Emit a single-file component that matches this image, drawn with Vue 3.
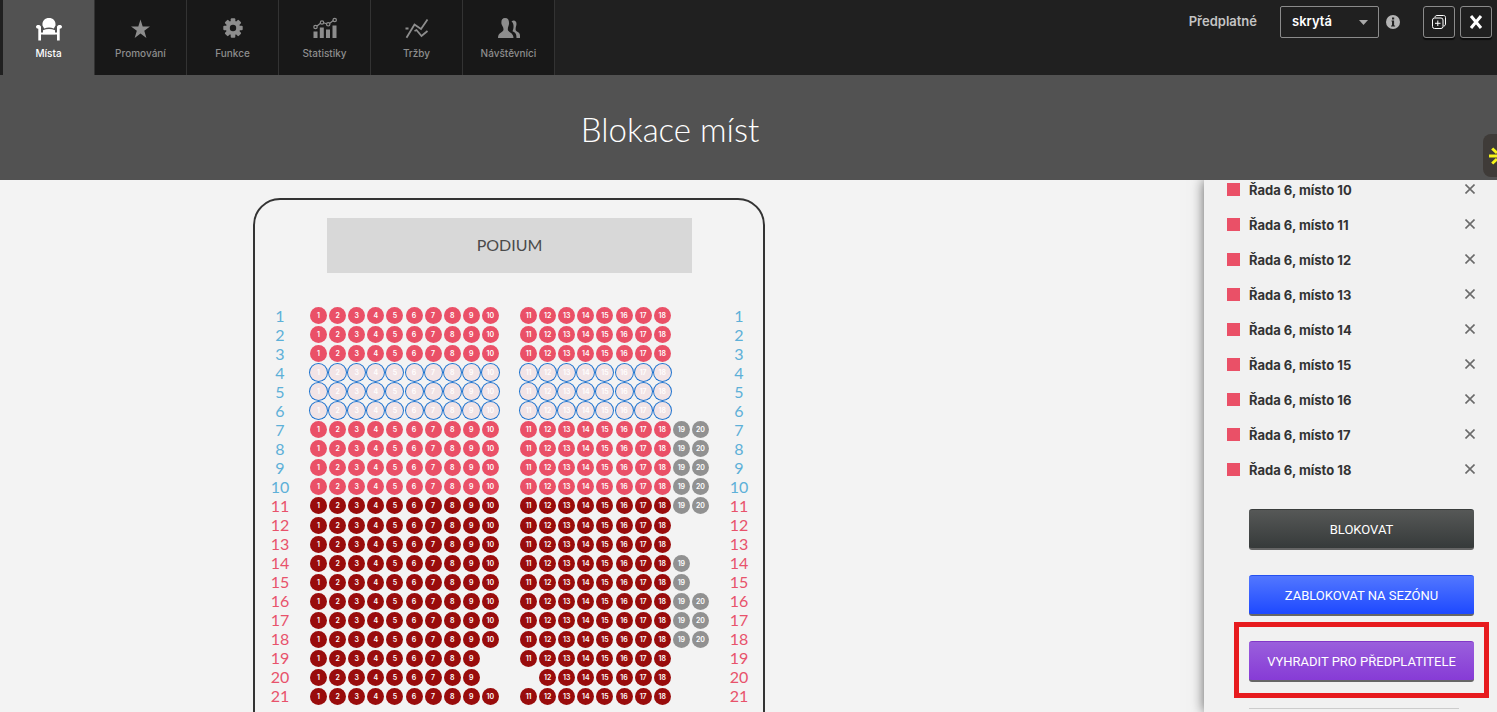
<template>
  <div class="page">
    <header class="topbar">
      <nav class="tabs">
        <a
          v-for="tab in tabs"
          :key="tab.id"
          href="#"
          class="tab"
          :class="{ 'tab--active': tab.id === activeTab }"
          @click.prevent="activeTab = tab.id"
        >
          <svg v-if="tab.id === 'seats'" class="tab-icon" viewBox="0 0 28 26">
            <path d="M7.500 9.500C7 4.500 10 2 14 2s7 2.500 6.500 7.500l-1.700 3C15.500 11.300 12.500 11.300 9.200 12.500z" />
            <path d="M8 14.200c3.800-1.700 8.200-1.700 12 0v4H8z" />
            <path d="M1 10.800c0-2.400 4.500-2.400 5 0v13.700H3.300V12.800C2 12.800 1 12 1 10.800z" />
            <path d="M27 10.800c0-2.400-4.500-2.400-5 0v13.700h2.700V12.800c1.300 0 2.300-.8 2.300-2z" />
            <path d="M6 16.500h16v2H6z" />
          </svg>
          <svg v-else-if="tab.id === 'promo'" class="tab-icon" viewBox="0 0 28 26">
            <path d="M13.500 3.500l2.200 7H23l-5.700 4.200 2.100 7.300-5.900-4.400L7.700 22l2.100-7.300L4 10.500h7.300z" />
          </svg>
          <svg v-else-if="tab.id === 'features'" class="tab-icon" viewBox="0 0 28 26">
            <rect
              v-for="angle in [0, 45, 90, 135]"
              :key="angle"
              x="11.700"
              y="2.300"
              width="4.600"
              height="19.400"
              rx="1"
              :transform="`rotate(${angle} 14 12)`"
            />
            <circle cx="14" cy="12" r="7.200" />
            <circle cx="14" cy="12" r="3.200" fill="#181818" />
          </svg>
          <svg v-else-if="tab.id === 'stats'" class="tab-icon" viewBox="0 0 28 26">
            <path d="M2.500 15.500h4V22h-4zM8.800 11.500h4V22h-4zM15 13.500h4V22h-4zM21.500 9.500h4V22h-4z" />
            <g fill="none" stroke="currentColor" stroke-width="1.200">
              <path d="M6 9.900l3.500-2.600M12.500 6.800l3 1M18.800 7.200l3.500-2.600" />
              <circle cx="4.500" cy="11" r="1.700" />
              <circle cx="11" cy="6.500" r="1.700" />
              <circle cx="17.200" cy="8.300" r="1.700" />
              <circle cx="23.700" cy="4" r="1.700" />
            </g>
          </svg>
          <svg v-else-if="tab.id === 'sales'" class="tab-icon" viewBox="0 0 28 26">
            <g fill="none" stroke="currentColor" stroke-width="1.800">
              <path d="M3.500 21.800L11.500 8.500l6.500 4.500L24.500 3.500" />
              <path d="M2.500 12.500h3M11.500 15l2-1 5 6 6-5" />
            </g>
          </svg>
          <svg v-else class="tab-icon" viewBox="0 0 28 26">
            <path d="M16.500 5.500c2-2 5.200-1 5 2.500-.1 2-.9 2.800-.9 5.500 0 2.500 4.400 2 4.400 6V22h-3.500c0-4.500-1.200-5.500-4-6.800.9-2.200 1.200-3.700 1-5.700-.2-1.600-.6-3-2-4z" />
            <path d="M10 2c3.300 0 4.300 2.500 4 6-.2 2-1.200 3-1.200 5.500 0 3 5.700 2.500 5.700 8.500H3c0-6 5.500-5.500 5.500-8.500C8.500 11 7 10 6.500 8 6 4.500 7 2 10 2z" />
          </svg>
          <span>{{ tab.label }}</span>
        </a>
      </nav>

      <div class="tools">
        <label class="tools-label" for="visibility">Předplatné</label>
        <div class="select-wrap">
          <select id="visibility" v-model="visibility" class="select">
            <option value="hidden">skrytá</option>
            <option value="public">veřejná</option>
          </select>
          <svg class="select-arrow" viewBox="0 0 10 5"><path d="M0 0h9L4.500 5z" /></svg>
        </div>
        <svg class="info" viewBox="0 0 14 14">
          <circle cx="7" cy="7" r="7" fill="#b4b4b4" />
          <path d="M5.500 5.500h2.600v5h1v1H5v-1h1v-4h-.5zM6 2.500h2.200v2H6z" fill="#222" />
        </svg>
        <button type="button" class="tool-btn tool-btn--copy" aria-label="Duplikovat">
          <svg viewBox="0 0 16 16" width="16" height="16" fill="none" stroke="#fff">
            <rect x="1.500" y="4" width="10.500" height="10.500" rx="2" />
            <path d="M4 3.500c0-1.300.7-2 2-2h6.500c1.300 0 2 .7 2 2V10c0 1.300-.7 2-2 2M6.800 6.500v5.500M4 9.300h5.500" />
          </svg>
        </button>
        <button type="button" class="tool-btn" aria-label="Zavřít">
          <svg viewBox="0 0 14 14" width="14" height="14" stroke="#fff" stroke-width="3">
            <path d="M2 1l10 12M12 1L2 13" />
          </svg>
        </button>
      </div>
    </header>

    <div class="banner">
      <h1 class="banner-title">Blokace míst</h1>
      <button type="button" class="widget" aria-label="Nápověda">
        <svg viewBox="0 0 24 24" width="24" height="24" stroke="#f5f51a" stroke-width="3">
          <path d="M1 12h8M23 12h-8M4.200 4.500l4.800 4.500M19.800 19.500L15 15M4.200 19.500L9 15M19.800 4.500L15 9M12 1v7M12 23v-7" />
        </svg>
      </button>
    </div>

    <main class="content">
      <section class="map">
        <div class="hall">
          <div class="podium">PODIUM</div>
          <div class="rows">
            <div v-for="row in rows" :key="row.number" class="row" :class="`row--${row.kind}`">
              <span class="row-label">{{ row.number }}</span>
              <div class="seats">
                <button
                  v-for="seat in row.seats"
                  :key="seat"
                  type="button"
                  class="seat"
                  :class="{ 'seat--extra': seat > 18 }"
                  :style="{ gridColumn: seat > 10 ? seat + 1 : seat }"
                >
                  {{ seat }}
                </button>
              </div>
              <span class="row-label">{{ row.number }}</span>
            </div>
          </div>
        </div>
      </section>

      <aside class="panel">
        <ul class="picked">
          <li v-for="seat in picked" :key="seat" class="picked-item">
            <span class="swatch"></span>
            <span class="picked-name">Řada 6, místo {{ seat }}</span>
            <button type="button" class="remove" aria-label="Odebrat" @click="remove(seat)">
              <svg viewBox="0 0 10 10" width="10" height="10" stroke="#6b6b6b" stroke-width="1.600">
                <path d="M.5.5l9 9M9.500.5l-9 9" />
              </svg>
            </button>
          </li>
        </ul>
        <div class="actions">
          <button type="button" class="action action--block">BLOKOVAT</button>
          <button type="button" class="action action--season">ZABLOKOVAT NA SEZÓNU</button>
          <div class="marked">
            <button type="button" class="action action--reserve">VYHRADIT PRO PŘEDPLATITELE</button>
          </div>
        </div>
        <hr class="divider" />
      </aside>
    </main>
  </div>
</template>

<script setup>
import { ref } from 'vue'

const tabs = [
  { id: 'seats', label: 'Místa' },
  { id: 'promo', label: 'Promování' },
  { id: 'features', label: 'Funkce' },
  { id: 'stats', label: 'Statistiky' },
  { id: 'sales', label: 'Tržby' },
  { id: 'visitors', label: 'Návštěvníci' },
]
const activeTab = ref('seats')
const visibility = ref('hidden')

const picked = ref([10, 11, 12, 13, 14, 15, 16, 17, 18])
const remove = (seat) => {
  picked.value = picked.value.filter((s) => s !== seat)
}

// last seat of the rows that are longer than 18
const lastSeat = { 7: 20, 8: 20, 9: 20, 10: 20, 11: 20, 14: 19, 15: 19, 16: 20, 17: 20, 18: 20 }
const missing = { 19: [10], 20: [10, 11] }

const kindOf = (n) => {
  if (n >= 4 && n <= 6) return 'picked'
  return n <= 10 ? 'front' : 'back'
}

const rows = Array.from({ length: 21 }, (_, i) => {
  const number = i + 1
  const seats = Array.from({ length: lastSeat[number] || 18 }, (_, s) => s + 1)
  return {
    number,
    kind: kindOf(number),
    seats: seats.filter((s) => !(missing[number] || []).includes(s)),
  }
})
</script>

<style>
body {
  background: #f3f3f3;
}
</style>

<style scoped>
.page {
  display: flex;
  flex-direction: column;
  height: 100vh;
  overflow: hidden;
  font-family: Lato, 'Open Sans', sans-serif;
  color: #333;
}

button {
  font-family: inherit;
  cursor: pointer;
}

.topbar {
  display: flex;
  justify-content: space-between;
  flex: none;
  height: 75px;
  background: #202020;
}

.tabs {
  display: flex;
  padding-left: 3px;
}

.tab {
  display: flex;
  flex-direction: column;
  align-items: center;
  gap: 4px;
  box-sizing: border-box;
  width: 92px;
  padding-top: 16px;
  border-right: 1px solid #333;
  background: #181818;
  color: #8d8d8d;
  font-family: Inter, sans-serif;
  font-size: 10px;
  font-weight: 500;
  line-height: 14px;
  text-decoration: none;
}

.tab--active {
  background: #525252;
  color: #fff;
}

.tab-icon {
  width: 28px;
  height: 26px;
  fill: currentColor;
}

.tools {
  display: flex;
  align-items: center;
  height: 32px;
  padding: 6px 5px 0 0;
}

.tools-label {
  margin-right: 23px;
  padding-bottom: 2px;
  color: #c4c4c4;
  font-family: Inter, sans-serif;
  font-size: 13px;
  font-weight: 600;
}

.select-wrap {
  position: relative;
  margin-right: 7px;
}

.select {
  display: block;
  appearance: none;
  width: 99px;
  height: 32px;
  padding: 0 11px 2px;
  border: 1px solid #8b8b8b;
  border-radius: 2px;
  background: transparent;
  color: #fff;
  font-family: Inter, sans-serif;
  font-size: 13px;
  font-weight: 600;
}

.select-arrow {
  position: absolute;
  top: 14px;
  right: 10px;
  width: 10px;
  height: 5px;
  fill: #aaa;
  pointer-events: none;
}

.info {
  width: 14px;
  height: 14px;
  margin-right: 23px;
}

.tool-btn {
  display: flex;
  align-items: center;
  justify-content: center;
  width: 32px;
  height: 32px;
  padding: 0;
  border: 1px solid #8b8b8b;
  border-radius: 3px;
  background: transparent;
  box-shadow: 0 2px 1px #0c0c0c;
}

.tool-btn--copy {
  margin-right: 5px;
}

.banner {
  position: relative;
  flex: none;
  height: 105px;
  background: #525252;
}

.banner-title {
  margin: 0;
  padding: 0 157px 0 0;
  color: #fff;
  font-size: 33px;
  font-weight: 300;
  line-height: 108px;
  text-align: center;
}

.widget {
  position: absolute;
  top: 59px;
  right: 0;
  z-index: 2;
  width: 14px;
  height: 43px;
  padding: 0 0 0 5px;
  border: 0;
  border-radius: 8px 0 0 8px;
  background: #3f3b38;
  overflow: hidden;
}

.widget svg {
  display: block;
}

.content {
  display: flex;
  flex: 1;
  min-height: 0;
}

.map {
  flex: 1;
  padding: 18px 0 0 253px;
  overflow: hidden;
}

.hall {
  box-sizing: border-box;
  width: 512px;
  padding-bottom: 60px;
  border: 2px solid #333;
  border-radius: 27px;
}

.podium {
  margin: 18px 71px 33px 72px;
  padding-bottom: 2px;
  background: #d8d8d8;
  color: #4a4a4a;
  font-size: 16px;
  line-height: 53px;
  text-align: center;
}

.rows {
  display: flex;
  flex-direction: column;
  height: 400px;
}

.row {
  display: grid;
  grid-template-columns: 48px 401px 48px;
  column-gap: 5px;
  flex: 1;
  align-items: center;
  padding-left: 1px;
  color: #5db0d8;
}

.row--back {
  color: #e8526b;
}

.row-label {
  font-size: 16px;
  line-height: 18px;
  text-align: center;
}

.seats {
  display: grid;
  grid-template-columns: repeat(21, 1fr);
  place-items: center;
  height: 17px;
}

.seat {
  box-sizing: border-box;
  width: 17px;
  height: 17px;
  padding: 0;
  border: 0;
  border-radius: 50%;
  background: #ea5067;
  color: #fff;
  font-family: Inter, sans-serif;
  font-size: 7px;
  font-weight: 600;
  line-height: 17px;
  text-align: center;
}

.row--picked .seat {
  background: #f2e4e6;
  box-shadow: 0 0 0 1px #1e73cf;
}

.row--back .seat {
  background: #990c0c;
}

.row .seat--extra {
  background: #919191;
}

.panel {
  z-index: 1;
  flex: none;
  box-sizing: border-box;
  width: 293px;
  padding: 0 23px;
  background: #f1f1f1;
  box-shadow: 0 0 12px rgba(0, 0, 0, 0.6);
  clip-path: inset(0 0 0 -20px);
}

/* the list is scrolled a little under the banner */
.picked {
  margin: -8px 0 0;
  padding: 0;
  list-style: none;
}

.picked-item {
  display: flex;
  align-items: center;
  height: 35px;
}

.swatch {
  width: 13px;
  height: 13px;
  margin-right: 9px;
  background: #ea5067;
}

.picked-name {
  flex: 1;
  font-family: Inter, sans-serif;
  font-size: 13px;
  font-weight: 700;
}

.remove {
  display: flex;
  padding: 0 0 2px;
  margin-right: -1px;
  border: 0;
  background: none;
}

.actions {
  display: flex;
  flex-direction: column;
  gap: 25px;
  padding: 22px 0 0 22px;
}

.action {
  box-sizing: border-box;
  width: 100%;
  height: 41px;
  padding: 0;
  border: 0;
  border-top: 1px solid #393d3c;
  border-bottom: 2px solid #666;
  border-radius: 3px;
  color: #fff;
  font-family: Roboto, sans-serif;
  font-size: 13px;
}

.action--block {
  background: linear-gradient(#565857, #363a3a);
}

.action--season {
  border-top-color: #2450f0;
  background: linear-gradient(#5277ff, #1e49ff);
}

.action--reserve {
  border-top-color: #8238c8;
  background: linear-gradient(#9a5fdc, #873bd6);
}

.marked {
  position: relative;
}

.marked::after {
  content: '';
  position: absolute;
  inset: -19px -15px -16px;
  border: 5px solid #e71b1e;
  pointer-events: none;
}

.divider {
  margin: 26px 15px 0 22px;
  border: 0;
  border-top: 1px solid #ccc;
}
</style>
